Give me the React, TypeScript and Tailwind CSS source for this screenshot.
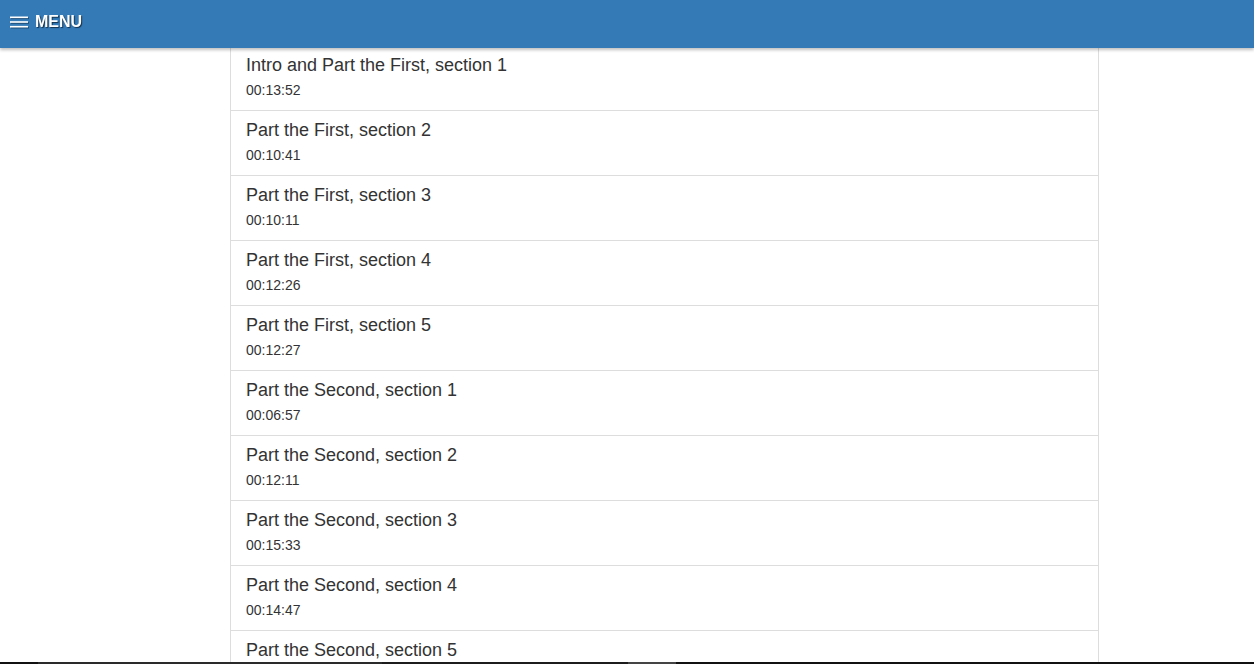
import React from "react";

const items = [
  ["Intro and Part the First, section 1", "00:13:52"],
  ["Part the First, section 2", "00:10:41"],
  ["Part the First, section 3", "00:10:11"],
  ["Part the First, section 4", "00:12:26"],
  ["Part the First, section 5", "00:12:27"],
  ["Part the Second, section 1", "00:06:57"],
  ["Part the Second, section 2", "00:12:11"],
  ["Part the Second, section 3", "00:15:33"],
  ["Part the Second, section 4", "00:14:47"],
  ["Part the Second, section 5", "00:11:02"],
];

export default function App() {
  return (
    <div className="min-h-screen bg-white text-[#333]" style={{ fontFamily: '"Liberation Sans", Arial, sans-serif' }}>
      <header className="sticky top-0 z-10 h-12 bg-[#337ab7] shadow-[0_2px_3px_rgba(0,0,0,0.25)] flex items-center pl-[10px] pb-[4px]">
        <button className="flex items-center gap-[7px] text-white">
          <svg width="18" height="12" viewBox="0 0 18 12" className="drop-shadow-[1px_1px_0_rgba(0,0,0,0.35)]">
            <rect x="0" y="0.5" width="18" height="1.6" fill="white" />
            <rect x="0" y="5.2" width="18" height="1.6" fill="white" />
            <rect x="0" y="9.9" width="18" height="1.6" fill="white" />
          </svg>
          <span className="text-[16px] font-bold leading-none [text-shadow:1px_1px_1px_rgba(0,0,0,0.6)]">MENU</span>
        </button>
      </header>
      <div className="-mt-[3px] ml-[230px] w-[869px]">
        {items.map(([title, time], i) => (
          <div key={i} className="border border-[#ddd] -mb-px px-[15px] pt-[10px] pb-[10px] h-[66px]">
            <h4 className="text-[18px] leading-[1.1] mb-[4px] text-[#333]">{title}</h4>
            <p className="text-[14px] leading-5 text-[#333]">{time}</p>
          </div>
        ))}
      </div>
      <div className="fixed bottom-0 left-0 right-0 h-[2px] flex">
        <div className="w-[38px] bg-[#111]" />
        <div className="w-[344px] bg-[#2a2a2a]" />
        <div className="w-[246px] bg-[#1c1c1c]" />
        <div className="w-[48px] bg-[#444]" />
        <div className="flex-1 bg-[#111]" />
      </div>
    </div>
  );
}
